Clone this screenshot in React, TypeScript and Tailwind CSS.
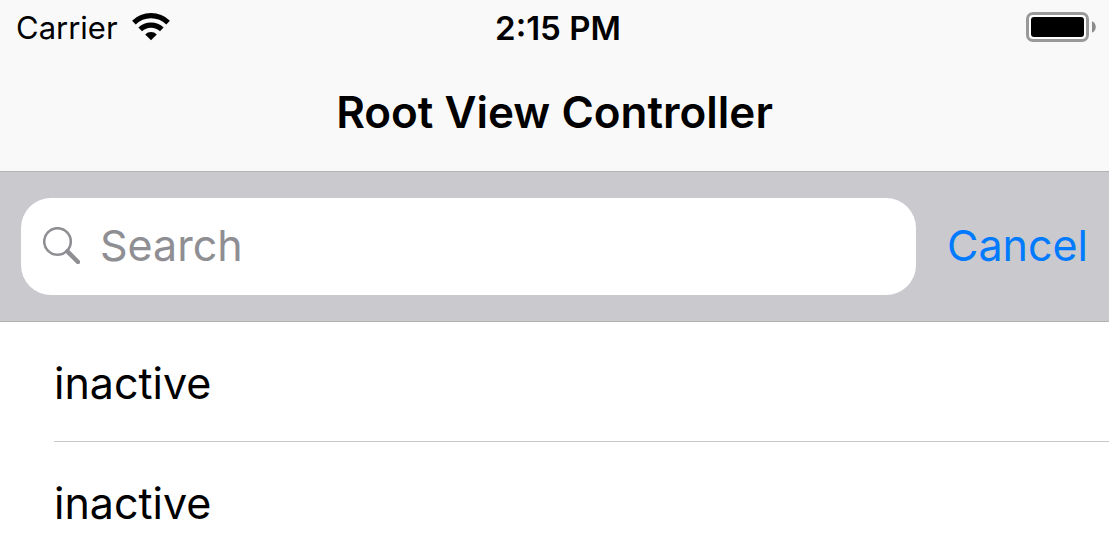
import React, { useState } from 'react';

type Row = {
  row_id: number;
  title: string;
};

const rows: Row[] = [
  { row_id: 1, title: 'inactive' },
  { row_id: 2, title: 'inactive' },
];

function WifiIcon() {
  return (
    <svg className="w-[38px] h-7" viewBox="0 0 38 28" fill="none" stroke="#000" aria-hidden="true">
      <path d="M1.9 9.6 A24.5 24.5 0 0 1 36.1 9.6" strokeWidth="5.2" />
      <path d="M8.2 16.4 A15.6 15.6 0 0 1 29.8 16.4" strokeWidth="5.2" />
      <path d="M13.2 21.4 A8.2 8.2 0 0 1 24.8 21.4 L19 27.2 Z" fill="#000" stroke="none" />
    </svg>
  );
}

function BatteryIcon() {
  return (
    <svg className="w-[70px] h-[30px]" viewBox="0 0 70 30" aria-hidden="true">
      <rect x="1.5" y="1.5" width="60" height="27" rx="5.5" fill="#fff" stroke="#999" strokeWidth="3" />
      <rect x="5" y="5" width="53" height="20" rx="3" fill="#000" />
      <path d="M66 9.2 C71 11 71 19 66 20.8 Z" fill="#8c8c8c" />
    </svg>
  );
}

function SearchIcon() {
  return (
    <svg className="w-[37px] h-[37px] shrink-0" viewBox="0 0 37 37" fill="none" stroke="#8e8e93" aria-hidden="true">
      <circle cx="14.5" cy="14.5" r="13.3" strokeWidth="2.6" />
      <path d="M24.4 24.4 L35 35" strokeWidth="4.4" strokeLinecap="round" />
    </svg>
  );
}

export default function App() {
  const [query, setQuery] = useState('');

  return (
    <div className="flex flex-col h-screen overflow-hidden bg-white text-black font-['Inter',sans-serif]">
      <header className="bg-[#f9f9f9] border-b border-[#b2b2b2]">
        <div className="grid grid-cols-[1fr_auto_1fr] items-center h-[54px] pl-4 pr-[13px] text-[32px] leading-10">
          <div className="flex items-center gap-[14px]">
            <span className="pt-0.5 text-[31px]">Carrier</span>
            <WifiIcon />
          </div>
          <span className="pl-1 pt-0.5 text-center text-[33px] font-semibold">2:15 PM</span>
          <div className="flex justify-end">
            <BatteryIcon />
          </div>
        </div>
        <h1 className="h-[117px] text-center text-[44px] leading-[117px] font-semibold">Root View Controller</h1>
      </header>

      <form
        onSubmit={(e) => e.preventDefault()}
        className="flex items-center gap-[31px] h-[150px] shrink-0 px-[21px] bg-[#c9c9ce] border-b border-[#b2b2b2]"
      >
        <label className="flex flex-1 min-w-0 items-center gap-5 h-[97px] px-[22px] pb-0.5 bg-white rounded-[30px]">
          <SearchIcon />
          <input
            type="text"
            aria-label="Search"
            value={query}
            onChange={(e) => setQuery(e.target.value)}
            placeholder="Search"
            className="flex-1 min-w-0 pb-0.5 text-[43px] leading-[56px] outline-none placeholder:text-[#8e8e93]"
          />
        </label>
        <button type="button" onClick={() => setQuery('')} className="pb-1 text-[43px] leading-[56px] text-[#007aff]">
          Cancel
        </button>
      </form>

      <ul className="pl-[54px]">
        {rows.map((row) => (
          <li key={row.row_id} className="flex items-center h-[120px] pt-0.5 text-[43px] leading-[56px] border-b border-[#c8c7cc]">
            {row.title}
          </li>
        ))}
      </ul>
    </div>
  );
}
